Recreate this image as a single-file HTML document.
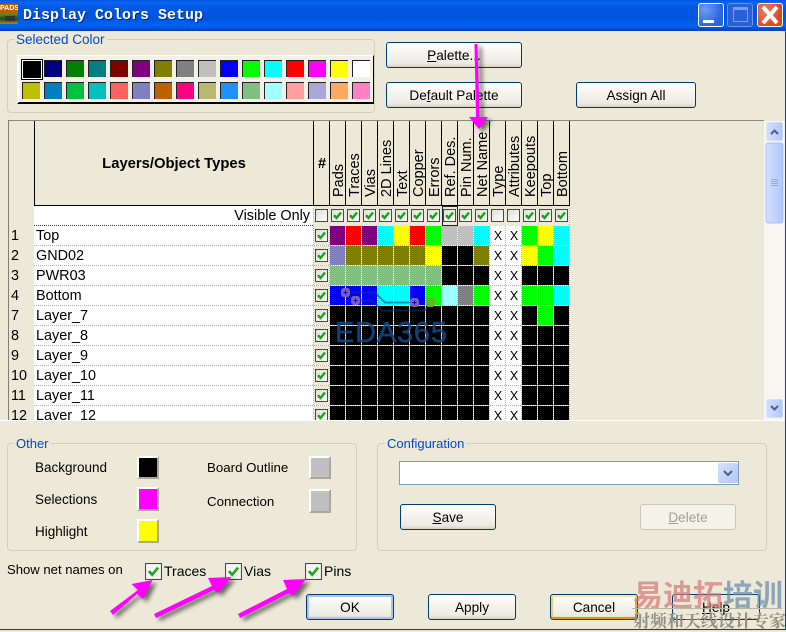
<!DOCTYPE html>
<html><head><meta charset="utf-8"><style>
html,body{margin:0;padding:0}
body{width:786px;height:630px;overflow:hidden;position:relative;background:#ECE9D8;font:13.5px "Liberation Sans","Noto Sans CJK SC",sans-serif;color:#000}
.a{position:absolute;white-space:nowrap}
.title{left:0;top:0;width:786px;height:31px;background:linear-gradient(#0053E0 0,#0A66F0 8%,#0058E4 22%,#0055DE 60%,#0064F4 82%,#0050DC 92%,#003FB8 100%)}
.ttext{left:23px;top:7px;font:bold 15px/18px "Liberation Mono",monospace;color:#fff;text-shadow:1px 1px 0 #002a90}
.grp{position:absolute;border:1px solid #D0D0BF;border-radius:4px;box-sizing:border-box}
.leg{position:absolute;color:#0046D5;background:#ECE9D8;padding:0 2px;line-height:16px;white-space:nowrap;font-size:13px}
.btn{position:absolute;box-sizing:border-box;border:1px solid #003C74;border-radius:3px;background:linear-gradient(#fff,#F5F4EE 40%,#ECEBE4 85%,#D6D0C5);text-align:center;line-height:25px;height:26px;font-size:13.6px}
.dis{border-color:#C9C7BA;background:#F4F3EA;color:#A1A192}
.sw{position:absolute;box-sizing:border-box;border:2px solid;border-color:#fff #ACA899 #ACA899 #fff}
.pal{position:absolute;left:17px;top:55px;width:357px;height:49px;box-sizing:border-box;background:#F3F1E7;border:2px solid;border-color:#fff #000 #000 #fff;border-width:1px 1px 2px 2px}
.pal i{position:absolute;width:18px;height:17px;box-sizing:border-box;border-top:1px solid #222;border-left:1px solid #222}
</style></head><body>
<div class="a title"></div>
<div class="a" style="left:0;top:4px;width:18px;height:10px;background:#B86000;color:#fff;font:bold 7px/10px 'Liberation Sans',sans-serif;text-align:center;overflow:hidden">PADS</div>
<div class="a" style="left:0;top:14px;width:18px;height:10px;background:linear-gradient(#509030,#284818 50%,#C08000)"></div>
<div class="a" style="left:5px;top:16px;width:10px;height:5px;background:#333"></div>
<div class="a ttext">Display Colors Setup</div>
<div class="a" style="left:698px;top:3px;width:26px;height:24px;box-sizing:border-box;border:1px solid #fff;border-radius:3px;background:radial-gradient(circle at 25% 25%,#6E9CF5,#2A63DE 70%)"></div>
<div class="a" style="left:703px;top:20px;width:11px;height:3px;background:#fff"></div>
<div class="a" style="left:727px;top:3px;width:26px;height:24px;box-sizing:border-box;border:1px solid #6E93E8;border-radius:3px;background:#2A60D4"></div>
<div class="a" style="left:733px;top:7px;width:15px;height:15px;box-sizing:border-box;border:1px solid #7C9CEB;border-top-width:3px;background:#2A60D4"></div>
<div class="a" style="left:757px;top:3px;width:26px;height:24px;box-sizing:border-box;border:1px solid #fff;border-radius:3px;background:radial-gradient(circle at 30% 30%,#EC8060,#D8491E 70%)"></div>

<div class="grp" style="left:7px;top:39px;width:368px;height:74px"></div>
<div class="leg" style="left:14px;top:32px;font-size:13.5px">Selected Color</div>
<div class="pal">
<i style="left:3px;top:4px;width:20px;height:19px;background:#000;border:1px solid #fff;outline:1px solid #000"></i>
<i style="left:25px;top:4px;background:#000080"></i><i style="left:47px;top:4px;background:#008000"></i><i style="left:69px;top:4px;background:#008080"></i><i style="left:91px;top:4px;background:#800000"></i><i style="left:113px;top:4px;background:#800080"></i><i style="left:135px;top:4px;background:#808000"></i><i style="left:157px;top:4px;background:#808080"></i><i style="left:179px;top:4px;background:#C0C0C0"></i><i style="left:201px;top:4px;background:#00F"></i><i style="left:223px;top:4px;background:#0F0"></i><i style="left:245px;top:4px;background:#0FF"></i><i style="left:267px;top:4px;background:#F00"></i><i style="left:289px;top:4px;background:#F0F"></i><i style="left:311px;top:4px;background:#FF0"></i><i style="left:333px;top:4px;background:#FFF"></i>
<i style="left:3px;top:26px;background:#C0C000"></i><i style="left:25px;top:26px;background:#0080C0"></i><i style="left:47px;top:26px;background:#00C040"></i><i style="left:69px;top:26px;background:#00C0C0"></i><i style="left:91px;top:26px;background:#FF6060"></i><i style="left:113px;top:26px;background:#8080C0"></i><i style="left:135px;top:26px;background:#C06000"></i><i style="left:157px;top:26px;background:#FF0080"></i><i style="left:179px;top:26px;background:#B8B870"></i><i style="left:201px;top:26px;background:#2090FF"></i><i style="left:223px;top:26px;background:#80C080"></i><i style="left:245px;top:26px;background:#A0FFFF"></i><i style="left:267px;top:26px;background:#FF9FA0"></i><i style="left:289px;top:26px;background:#A8A8D8"></i><i style="left:311px;top:26px;background:#FFA860"></i><i style="left:333px;top:26px;background:#FF80C0"></i>
</div>
<div class="btn" style="left:386px;top:42px;width:136px"><u>P</u>alette...</div>
<div class="btn" style="left:386px;top:82px;width:136px">De<u>f</u>ault Palette</div>
<div class="btn" style="left:576px;top:82px;width:120px">Assign All</div>

<svg class="a" style="left:0;top:0" width="786" height="420" viewBox="0 0 786 420" font-family="Liberation Sans, sans-serif" font-size="14.4">
<defs>
<linearGradient id="bx" x1="0" y1="0" x2="1" y2="1"><stop offset="0" stop-color="#DCDCD7"/><stop offset="1" stop-color="#fff"/></linearGradient>
<g id="u"><rect x=".5" y=".5" width="12" height="12" fill="url(#bx)" stroke="#1C5180"/></g>
<g id="c"><use href="#u"/><path d="M3 6.200 5.500 9 10 3.500" fill="none" stroke="#21A121" stroke-width="2.500"/></g>
<linearGradient id="sb" x1="0" y1="0" x2="1" y2="0"><stop offset="0" stop-color="#D4DFFB"/><stop offset=".5" stop-color="#C3D3FD"/><stop offset="1" stop-color="#B2C6F6"/></linearGradient>
</defs>
<rect x="8" y="120" width="756" height="1" fill="#8A8A78"/>
<rect x="8" y="120" width="1" height="300" fill="#808070"/>
<rect x="34" y="206" width="280" height="214" fill="#fff"/>
<rect x="490" y="226" width="32" height="194" fill="#fff"/>
<rect x="330" y="306" width="160" height="114" fill="#000"/>
<rect x="522" y="306" width="48" height="114" fill="#000"/>
<g>
<rect x="330" y="226" width="16" height="20" fill="#800080"/><rect x="346" y="226" width="16" height="20" fill="#F00"/><rect x="362" y="226" width="16" height="20" fill="#800080"/><rect x="378" y="226" width="16" height="20" fill="#0FF"/><rect x="394" y="226" width="16" height="20" fill="#FF0"/><rect x="410" y="226" width="16" height="20" fill="#F00"/><rect x="426" y="226" width="16" height="20" fill="#0F0"/><rect x="442" y="226" width="32" height="20" fill="#C0C0C0"/><rect x="474" y="226" width="16" height="20" fill="#0FF"/><rect x="522" y="226" width="16" height="20" fill="#0F0"/><rect x="538" y="226" width="16" height="20" fill="#FF0"/><rect x="554" y="226" width="16" height="20" fill="#0FF"/>
<rect x="330" y="246" width="16" height="20" fill="#8080C0"/><rect x="346" y="246" width="80" height="20" fill="#808000"/><rect x="426" y="246" width="16" height="20" fill="#FF0"/><rect x="442" y="246" width="32" height="20" fill="#000"/><rect x="474" y="246" width="16" height="20" fill="#808000"/><rect x="522" y="246" width="16" height="20" fill="#FF0"/><rect x="538" y="246" width="16" height="20" fill="#0F0"/><rect x="554" y="246" width="16" height="20" fill="#0FF"/>
<rect x="330" y="266" width="112" height="20" fill="#80C080"/><rect x="442" y="266" width="48" height="20" fill="#000"/><rect x="522" y="266" width="48" height="20" fill="#000"/>
<rect x="330" y="286" width="48" height="20" fill="#00F"/><rect x="378" y="286" width="32" height="20" fill="#0FF"/><rect x="410" y="286" width="16" height="20" fill="#00F"/><rect x="426" y="286" width="16" height="20" fill="#0F0"/><rect x="442" y="286" width="16" height="20" fill="#A0FFFF"/><rect x="458" y="286" width="16" height="20" fill="#808080"/><rect x="474" y="286" width="16" height="20" fill="#0F0"/><rect x="522" y="286" width="32" height="20" fill="#0F0"/><rect x="554" y="286" width="16" height="20" fill="#0FF"/>
<rect x="538" y="306" width="16" height="20" fill="#0F0"/>
</g>
<g stroke="#fff" fill="none">
<path d="M34 245.500H570M34 265.500H570M34 285.500H570M34 305.500H570M34 325.500H570M34 345.500H570M34 365.500H570M34 385.500H570M34 405.500H570"/>
<path d="M313.500 206V420M329.500 226V420M345.500 226V420M361.500 226V420M377.500 226V420M393.500 226V420M409.500 226V420M425.500 226V420M441.500 226V420M457.500 226V420M473.500 226V420M489.500 226V420M505.500 226V420M521.500 226V420M537.500 226V420M553.500 226V420M569.500 206V420"/>
</g>
<g stroke="#B0B0B0" fill="none" stroke-dasharray="1 1">
<path d="M34 245.500H570M34 265.500H570M34 285.500H570M34 305.500H570M34 325.500H570M34 345.500H570M34 365.500H570M34 385.500H570M34 405.500H570"/>
<path d="M313.500 206V420M329.500 226V420M345.500 226V420M361.500 226V420M377.500 226V420M393.500 226V420M409.500 226V420M425.500 226V420M441.500 226V420M457.500 226V420M473.500 226V420M489.500 226V420M505.500 226V420M521.500 226V420M537.500 226V420M553.500 226V420M569.500 206V420"/>
</g>
<path d="M34 225.500H313" stroke="#0046D5" stroke-dasharray="1 1" fill="none"/>
<rect x="34" y="205" width="536" height="1" fill="#000"/>
<path d="M34.500 121V205M313.500 121V205M329.500 121V205M345.500 121V205M361.500 121V205M377.500 121V205M393.500 121V205M409.500 121V205M425.500 121V205M441.500 121V205M457.500 121V205M473.500 121V205M489.500 121V205M505.500 121V205M521.500 121V205M537.500 121V205M553.500 121V205M569.500 121V205" stroke="#000" fill="none"/>
<text x="174" y="168" font-weight="bold" font-size="14.800" text-anchor="middle">Layers/Object Types</text>
<text x="322" y="168" font-weight="bold" text-anchor="middle">#</text>
<g font-size="14.500">
<text transform="translate(343 197) rotate(-90)">Pads</text>
<text transform="translate(359 197) rotate(-90)">Traces</text>
<text transform="translate(375 197) rotate(-90)">Vias</text>
<text transform="translate(391 197) rotate(-90)">2D Lines</text>
<text transform="translate(407 197) rotate(-90)">Text</text>
<text transform="translate(423 197) rotate(-90)">Copper</text>
<text transform="translate(439 197) rotate(-90)">Errors</text>
<text transform="translate(455 197) rotate(-90)">Ref. Des.</text>
<text transform="translate(471 197) rotate(-90)">Pin Num.</text>
<text transform="translate(487 197) rotate(-90)">Net Name</text>
<text transform="translate(503 197) rotate(-90)">Type</text>
<text transform="translate(519 197) rotate(-90)">Attributes</text>
<text transform="translate(535 197) rotate(-90)">Keepouts</text>
<text transform="translate(551 197) rotate(-90)">Top</text>
<text transform="translate(567 197) rotate(-90)">Bottom</text>
</g>
<text x="310" y="220" text-anchor="end">Visible Only</text>
<g>
<text x="11" y="240">1</text><text x="36" y="240">Top</text>
<text x="11" y="260">2</text><text x="36" y="260">GND02</text>
<text x="11" y="280">3</text><text x="36" y="280">PWR03</text>
<text x="11" y="300">4</text><text x="36" y="300">Bottom</text>
<text x="11" y="320">7</text><text x="36" y="320">Layer_7</text>
<text x="11" y="340">8</text><text x="36" y="340">Layer_8</text>
<text x="11" y="360">9</text><text x="36" y="360">Layer_9</text>
<text x="11" y="380">10</text><text x="36" y="380">Layer_10</text>
<text x="11" y="400">11</text><text x="36" y="400">Layer_11</text>
<text x="11" y="420">12</text><text x="36" y="420">Layer_12</text>
</g>
<g text-anchor="middle" font-size="12.500">
<text x="498" y="240">X</text><text x="514" y="240">X</text>
<text x="498" y="260">X</text><text x="514" y="260">X</text>
<text x="498" y="280">X</text><text x="514" y="280">X</text>
<text x="498" y="300">X</text><text x="514" y="300">X</text>
<text x="498" y="320">X</text><text x="514" y="320">X</text>
<text x="498" y="340">X</text><text x="514" y="340">X</text>
<text x="498" y="360">X</text><text x="514" y="360">X</text>
<text x="498" y="380">X</text><text x="514" y="380">X</text>
<text x="498" y="400">X</text><text x="514" y="400">X</text>
<text x="498" y="420">X</text><text x="514" y="420">X</text>
</g>
<use href="#u" x="315" y="209"/><use href="#c" x="331" y="209"/><use href="#c" x="347" y="209"/><use href="#c" x="363" y="209"/><use href="#c" x="379" y="209"/><use href="#c" x="395" y="209"/><use href="#c" x="411" y="209"/><use href="#c" x="427" y="209"/><use href="#c" x="443" y="209"/><use href="#c" x="459" y="209"/><use href="#c" x="475" y="209"/><use href="#u" x="491" y="209"/><use href="#u" x="507" y="209"/><use href="#c" x="523" y="209"/><use href="#c" x="539" y="209"/><use href="#c" x="555" y="209"/>
<rect x="442.500" y="206.500" width="15" height="19" fill="none" stroke="#222"/>
<use href="#c" x="315" y="229"/><use href="#c" x="315" y="249"/><use href="#c" x="315" y="269"/><use href="#c" x="315" y="289"/><use href="#c" x="315" y="309"/><use href="#c" x="315" y="329"/><use href="#c" x="315" y="349"/><use href="#c" x="315" y="369"/><use href="#c" x="315" y="389"/><use href="#c" x="315" y="409"/>
<g fill="none" stroke="#0A3A80" stroke-width="2" opacity=".55">
<path d="M345 292.500H375L385 302.500H413"/>
<path d="M356 300.500H372L382 310.500H425L430 303"/>
</g>
<rect x="341" y="288" width="9" height="9" rx="3" fill="#8060A8"/><path d="M345.500 290.500v4M343.500 292.500h4" stroke="#00F"/>
<rect x="351" y="296" width="9" height="9" rx="3" fill="#8060A8"/><path d="M355.500 298.500v4M353.500 300.500h4" stroke="#00F"/>
<rect x="410" y="298" width="9" height="9" rx="3" fill="#8060A8"/><path d="M414.500 300.500v4M412.500 302.500h4" stroke="#00F"/>
<rect x="426" y="298" width="9" height="9" rx="3" fill="#78A828"/><path d="M430.500 300.500v4M428.500 302.500h4" stroke="#0F0"/>
<text x="335" y="342" font-size="29" textLength="112" fill="#144A8A" stroke="#144A8A" stroke-width=".5" opacity=".85">EDA365</text>
<rect x="764" y="121" width="21" height="299" fill="#F7F6F0"/>
<rect x="766" y="122" width="17" height="19" rx="2" fill="url(#sb)" stroke="#fff" stroke-width=".5"/>
<path d="M771 134 774.500 130.500 778 134" fill="none" stroke="#4D6185" stroke-width="2"/>
<rect x="766" y="143" width="17" height="80" rx="2" fill="url(#sb)" stroke="#9DB3E6" stroke-width=".7"/>
<path d="M771 179.500h7M771 181.500h7M771 183.500h7M771 185.500h7" stroke="#8FA8EC" fill="none"/>
<rect x="766" y="399" width="17" height="19" rx="2" fill="url(#sb)" stroke="#fff" stroke-width=".5"/>
<path d="M771 406 774.500 409.500 778 406" fill="none" stroke="#4D6185" stroke-width="2"/>
</svg>
<div class="a" style="left:0;top:420px;width:785px;height:1px;background:#fff"></div>

<div class="grp" style="left:7px;top:443px;width:350px;height:108px"></div>
<div class="leg" style="left:14px;top:436px">Other</div>
<div class="a" style="left:35px;top:460px;line-height:16px">Background</div>
<div class="a" style="left:35px;top:492px;line-height:16px">Selections</div>
<div class="a" style="left:35px;top:524px;line-height:16px">Highlight</div>
<div class="a" style="left:207px;top:460px;line-height:16px;font-size:13.300px">Board Outline</div>
<div class="a" style="left:207px;top:494px;line-height:16px;font-size:13.300px">Connection</div>
<div class="sw" style="left:137px;top:456px;width:22px;height:23px;background:#000"></div>
<div class="sw" style="left:137px;top:487px;width:22px;height:24px;background:#F0F"></div>
<div class="sw" style="left:137px;top:519px;width:22px;height:24px;background:#FF0"></div>
<div class="sw" style="left:309px;top:456px;width:22px;height:23px;background:#C0C0C0"></div>
<div class="sw" style="left:309px;top:489px;width:22px;height:24px;background:#C0C0C0"></div>

<div class="grp" style="left:377px;top:443px;width:390px;height:108px"></div>
<div class="leg" style="left:385px;top:436px">Configuration</div>
<div class="a" style="left:399px;top:461px;width:340px;height:24px;box-sizing:border-box;border:1px solid #7F9DB9;background:#fff"></div>
<div class="a" style="left:718px;top:463px;width:20px;height:20px;border-radius:2px;background:linear-gradient(135deg,#D6E2FD,#B2C6F6)"></div>
<svg class="a" style="left:718px;top:463px" width="20" height="20"><path d="M6 8 10 12 14 8" fill="none" stroke="#4D6185" stroke-width="2"/></svg>
<div class="btn" style="left:400px;top:504px;width:96px"><u>S</u>ave</div>
<div class="btn dis" style="left:640px;top:504px;width:96px"><u>D</u>elete</div>

<div class="a" style="left:7px;top:562px;line-height:16px;font-size:13.100px">Show net names on</div>
<svg class="a" style="left:145px;top:563px" width="17" height="17" viewBox="0 0 13 13"><rect x=".4" y=".4" width="12.200" height="12.200" fill="#F4F4F0" stroke="#1C5180" stroke-width=".8"/><path d="M3 6.200 5.500 9 10 3.500" fill="none" stroke="#21A121" stroke-width="2"/></svg>
<svg class="a" style="left:225px;top:563px" width="17" height="17" viewBox="0 0 13 13"><rect x=".4" y=".4" width="12.200" height="12.200" fill="#F4F4F0" stroke="#1C5180" stroke-width=".8"/><path d="M3 6.200 5.500 9 10 3.500" fill="none" stroke="#21A121" stroke-width="2"/></svg>
<svg class="a" style="left:305px;top:563px" width="17" height="17" viewBox="0 0 13 13"><rect x=".4" y=".4" width="12.200" height="12.200" fill="#F4F4F0" stroke="#1C5180" stroke-width=".8"/><path d="M3 6.200 5.500 9 10 3.500" fill="none" stroke="#21A121" stroke-width="2"/></svg>
<div class="a" style="left:164px;top:563px;line-height:16px;font-size:14px">Traces</div>
<div class="a" style="left:244px;top:563px;line-height:16px;font-size:14px">Vias</div>
<div class="a" style="left:324px;top:563px;line-height:16px;font-size:14px">Pins</div>

<div class="btn" style="left:306px;top:594px;width:88px;box-shadow:inset 0 0 0 2px #A9C3EE">OK</div>
<div class="btn" style="left:428px;top:594px;width:88px">Apply</div>
<div class="btn" style="left:550px;top:594px;width:88px;box-shadow:inset 0 2px 0 #FBE3A0,inset 0 -2px 0 #E59700,inset 2px 0 0 #F6CC6C,inset -2px 0 0 #F0B030">Cancel</div>
<div class="btn" style="left:672px;top:594px;width:88px;background:transparent"><u>H</u>elp</div>

<div class="a" style="left:633px;top:575px;font:bold 30px/36px 'Noto Sans CJK SC',sans-serif;color:rgba(214,120,120,.72);width:90px">易迪拓</div>
<div class="a" style="left:723px;top:575px;font:bold 30px/36px 'Noto Sans CJK SC',sans-serif;color:rgba(100,135,170,.7)">培训</div>
<div class="a" style="left:632px;top:608px;width:150px;height:1px;background:#B8B6A8"></div>
<div class="a" style="left:633px;top:609px;font:bold 17px/21px 'Noto Serif CJK SC','Noto Sans CJK SC',serif;color:#8F8F86">射频和天线设计专家</div>

<svg class="a" style="left:0;top:0;filter:drop-shadow(4px 3px 2px rgba(0,0,0,.55))" width="786" height="630" fill="#FF00FF">
<path d="M474.500 44H477.500L479.500 117H488L479 129 469 117H476Z"/>
<path d="M110 611 138 590 131.500 584 152.500 580 143 599 137 594 113 615Z"/>
<path d="M154 614 212 586 208 578 231.500 577 218 593 214 590 156 618Z"/>
<path d="M238 614 287 589 283 580 306 579 293 596 289 593 240 618Z"/>
</svg>
<div class="a" style="left:785px;top:31px;width:1px;height:599px;background:#0831D9"></div>
<div class="a" style="left:0;top:629px;width:786px;height:1px;background:#0831D9"></div>
<svg class="a" style="left:757px;top:3px" width="26" height="24"><path d="M6 4 20 20M20 4 6 20" stroke="#fff" stroke-width="4" fill="none"/></svg>
</body></html>
